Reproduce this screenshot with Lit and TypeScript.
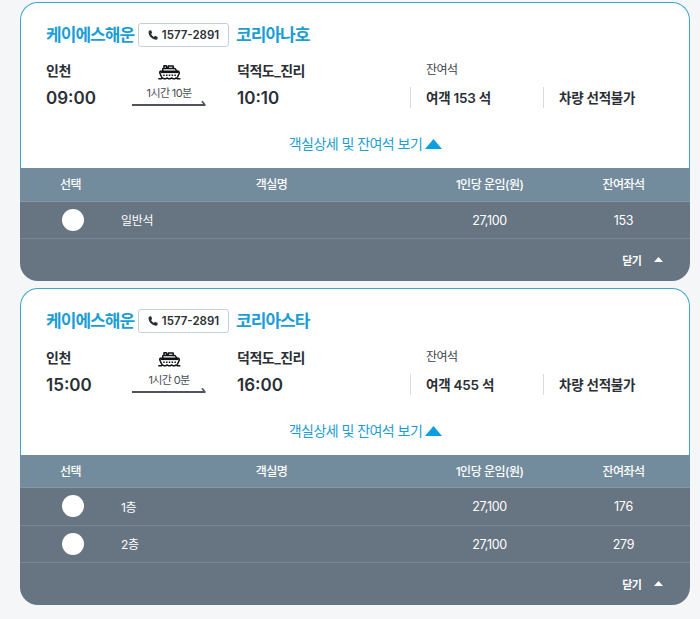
import { LitElement, html, css, svg } from 'lit';
import { customElement, property } from 'lit/decorators.js';

interface Room {
  name: string;
  fare: string;
  seats: number;
}

interface Sailing {
  company: string;
  phone: string;
  ship: string;
  from: string;
  to: string;
  departure: string;
  arrival: string;
  duration: string;
  passengerSeats: number;
  rooms: Room[];
}

const SAILINGS: Sailing[] = [
  {
    company: '케이에스해운',
    phone: '1577-2891',
    ship: '코리아나호',
    from: '인천',
    to: '덕적도_진리',
    departure: '09:00',
    arrival: '10:10',
    duration: '1시간 10분',
    passengerSeats: 153,
    rooms: [{ name: '일반석', fare: '27,100', seats: 153 }],
  },
  {
    company: '케이에스해운',
    phone: '1577-2891',
    ship: '코리아스타',
    from: '인천',
    to: '덕적도_진리',
    departure: '15:00',
    arrival: '16:00',
    duration: '1시간 0분',
    passengerSeats: 455,
    rooms: [
      { name: '1층', fare: '27,100', seats: 176 },
      { name: '2층', fare: '27,100', seats: 279 },
    ],
  },
];

const phoneIcon = svg`
  <svg class="phone-icon" width="10" height="10" viewBox="0 0 16 16">
    <path fill="currentColor" d="M2.600.9 4.200.5c.6-.1 1 .2 1.200.7l1.100 3c.1.4 0 .8-.3 1.100L4.900 6.500c1 2 2.500 3.500 4.600 4.600l1.200-1.400c.3-.3.7-.4 1.100-.3l3 1.200c.5.2.8.7.7 1.200l-.5 2.400c-.1.7-.7 1.200-1.400 1.200C6.500 15.400.8 9.700.8 2.700.8 1.700 1.500 1.200 2.600.9z" />
  </svg>
`;

const shipIcon = svg`
  <svg class="ship-icon" width="23" height="15" viewBox="0 0 23 15">
    <g fill="none" stroke="#101215" stroke-width="1.500" stroke-linejoin="round">
      <path d="M4.800 6V3.700l1.200-.4V.8h2.300l.4 2h1.500V.9h5v2.500l1.800.2 2 2.600" />
      <path d="M6 3.500h9.500" />
      <path d="M1.800 6.300h18.900l.7 1.700-2.200 4.600M3.900 12.600 1.800 8V6.300" />
      <path d="M.3 13.800h2.900l1.300-.9 1.700.9h1.500l1.400-.9 1.600.9h1.500l1.400-.9 1.600.9h1.500l1.400-.9 1.400.9h2.900" />
    </g>
    <path d="M2.500 7.500h18" stroke="#101215" stroke-width="1.200" />
    <path d="M5.200 10.300h13" stroke="#101215" stroke-width="1.400" stroke-dasharray="1.500 1.300" />
  </svg>
`;

@customElement('sailing-card')
export class SailingCard extends LitElement {
  @property({ attribute: false }) declare sailing: Sailing;

  static override styles = css`
    :host {
      display: block;
      color: #2b2f36;
    }

    .summary {
      box-sizing: border-box;
      height: 166.67px;
      padding: 20px 24px 0 25px;
      border: 1px solid #3ba5ca;
      border-bottom: 0;
      border-radius: 18px 18px 0 0;
      background: #fff;
    }

    .head {
      display: flex;
      align-items: center;
      height: 24px;
    }

    .title {
      color: #1b9dd5;
      font-size: 17px;
      font-weight: 700;
      letter-spacing: -0.95px;
      line-height: 24px;
      width: 92px;
      white-space: nowrap;
    }

    .phone {
      display: flex;
      align-items: center;
      justify-content: center;
      gap: 4px;
      box-sizing: border-box;
      width: 91px;
      height: 24px;
      margin-right: 7px;
      padding: 0;
      border: 1px solid #c6cddb;
      border-radius: 3px;
      background: #fff;
      color: #2b2f36;
      font: inherit;
      font-size: 11.5px;
      font-weight: 600;
    }

    .trip {
      display: grid;
      grid-template-columns: 86px 105px 173px 133px 1fr;
      grid-template-rows: 20px 36px;
      align-items: center;
      margin-top: 13.33px;
      white-space: nowrap;
    }

    .port {
      font-size: 14px;
      font-weight: 600;
      letter-spacing: -0.5px;
    }

    .time {
      font-size: 17px;
      font-weight: 600;
    }

    .voyage {
      grid-column: 2;
      grid-row: 1 / 3;
      align-self: start;
      display: flex;
      flex-direction: column;
      align-items: center;
      width: 74px;
      padding-top: 5px;
    }

    .ship-icon {
      display: block;
    }

    .duration {
      height: 20px;
      margin-top: 3px;
      color: #4a4e55;
      font-size: 11px;
      font-weight: 400;
      letter-spacing: -0.65px;
      line-height: 20px;
    }

    .arrow {
      display: block;
      margin-top: -3px;
    }

    .label {
      padding-left: 16px;
      color: #3c4148;
      font-size: 12px;
      letter-spacing: -0.5px;
      margin-top: -3px;
    }

    .seats {
      display: flex;
      align-items: center;
      box-sizing: border-box;
      height: 21px;
      padding: 0 0 2px 15px;
      border-left: 1px solid #d5dbe3;
      font-size: 13.5px;
      font-weight: 600;
      letter-spacing: -0.25px;
    }

    .toggle {
      display: flex;
      align-items: center;
      justify-content: center;
      gap: 3px;
      height: 20px;
      margin-top: 17px;
      padding-left: 20px;
      color: #1b9dd5;
      font-size: 14px;
      letter-spacing: -0.55px;
    }

    .toggle-mark {
      margin-top: 2px;
    }

    .grid-row {
      display: grid;
      grid-template-columns: 101px 301px 135px 133px;
      align-items: center;
      box-sizing: border-box;
      height: 37.33px;
      border-bottom: 1px solid #7a8896;
      background: #677482;
      color: #fff;
      font-size: 12.5px;
      letter-spacing: -0.3px;
      text-align: center;
    }

    .grid-head {
      height: 33.33px;
      padding-bottom: 2px;
      border-bottom-color: #8597a5;
      background: #738c9d;
      font-size: 12px;
      font-weight: 500;
      letter-spacing: -0.5px;
    }

    .radio {
      justify-self: center;
      width: 22px;
      height: 22px;
      margin-left: 5px;
      border-radius: 50%;
      background: #fff;
    }

    .room-name {
      font-size: 12px;
      text-align: left;
    }

    .cell {
      padding-top: 1px;
    }

    .foot {
      display: flex;
      align-items: center;
      justify-content: flex-end;
      gap: 13px;
      box-sizing: border-box;
      height: 42px;
      padding: 0 27px 0 0;
      border-radius: 0 0 18px 18px;
      background: #677482;
      color: #fff;
      font-size: 11px;
      font-weight: 700;
      letter-spacing: -0.8px;
    }
  `;

  override render() {
    const s = this.sailing;
    return html`
      <div class="summary">
        <div class="head">
          <span class="title">${s.company}</span>
          <button class="phone">${phoneIcon}<span>${s.phone}</span></button>
          <span class="title">${s.ship}</span>
        </div>
        <div class="trip">
          <span class="port">${s.from}</span>
          <div class="voyage">
            ${shipIcon}
            <span class="duration">${s.duration}</span>
            <svg class="arrow" width="74" height="6" viewBox="0 0 74 6">
              <path d="M0 5h73.500" fill="none" stroke="#4f545c" stroke-width="1.900" />
              <path d="M70 1.200 72.500 4.500" fill="none" stroke="#4f545c" stroke-width="1.700" />
            </svg>
          </div>
          <span class="port">${s.to}</span>
          <span class="label">잔여석</span>
          <span></span>
          <span class="time">${s.departure}</span>
          <span class="time">${s.arrival}</span>
          <span class="seats">여객 ${s.passengerSeats} 석</span>
          <span class="seats">차량 선적불가</span>
        </div>
        <div class="toggle">
          <span>객실상세 및 잔여석 보기</span>
          <svg class="toggle-mark" width="17" height="10" viewBox="0 0 17 10"><path d="M8.500 0 17 10H0z" fill="#0aa0e0" /></svg>
        </div>
      </div>
      <div class="grid-row grid-head">
        <span>선택</span>
        <span>객실명</span>
        <span>1인당 운임(원)</span>
        <span>잔여좌석</span>
      </div>
      ${s.rooms.map(
        (room) => html`
          <div class="grid-row">
            <span class="radio"></span>
            <span class="room-name">${room.name}</span>
            <span class="cell">${room.fare}</span>
            <span class="cell">${room.seats}</span>
          </div>
        `
      )}
      <div class="foot">
        <span>닫기</span>
        <svg width="9" height="5" viewBox="0 0 9 5"><path d="M4.500 0 9 5H0z" fill="#fff" /></svg>
      </div>
    `;
  }
}

@customElement('app-root')
export class AppRoot extends LitElement {
  static override styles = css`
    :host {
      display: flex;
      flex-direction: column;
      gap: 7.33px;
      box-sizing: border-box;
      height: 619px;
      padding: 1.67px 10px 0 20px;
      overflow: hidden;
      background: #f4f6f8;
      font-family: Inter, 'Noto Sans CJK KR', sans-serif;
    }
  `;

  override render() {
    return html`${SAILINGS.map((s) => html`<sailing-card .sailing=${s}></sailing-card>`)}`;
  }
}
